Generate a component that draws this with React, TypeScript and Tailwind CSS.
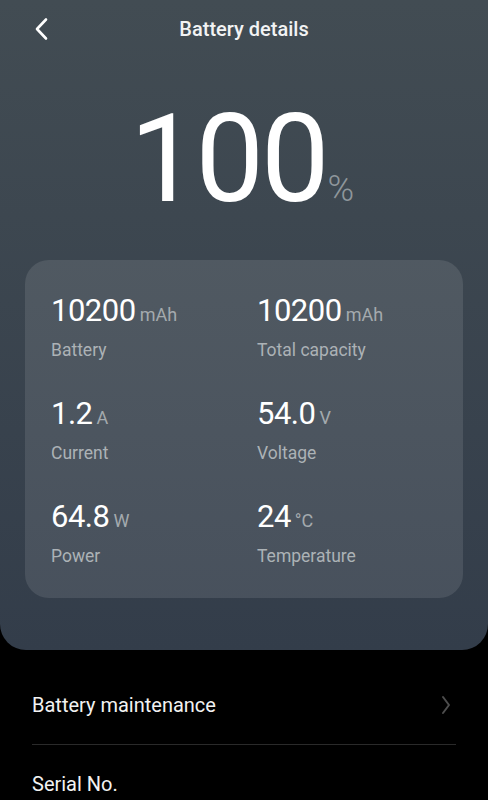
import React from "react";

const stats = [
  { value: "10200", unit: "mAh", label: "Battery" },
  { value: "10200", unit: "mAh", label: "Total capacity" },
  { value: "1.2", unit: "A", label: "Current" },
  { value: "54.0", unit: "V", label: "Voltage" },
  { value: "64.8", unit: "W", label: "Power" },
  { value: "24", unit: "°C", label: "Temperature" },
];

export default function App() {
  return (
    <div
      className="w-[488px] min-h-[800px] bg-black overflow-hidden"
      style={{ fontFamily: "Roboto, 'Noto Sans', sans-serif" }}
    >
      <div className="h-[650px] rounded-b-[26px] bg-gradient-to-b from-[#424c53] to-[#333d4a] flex flex-col">
        <div className="relative h-[58px] flex items-center justify-center">
          <svg
            className="absolute left-[33px] top-[17px]"
            width="18"
            height="24"
            viewBox="0 0 18 24"
            fill="none"
          >
            <path d="M13 2.5 L4 12 L13 21.5" stroke="#ffffff" strokeWidth="2.6" strokeLinecap="round" strokeLinejoin="round" />
          </svg>
          <span className="text-[20px] font-medium text-[#f2f3f4]">Battery details</span>
        </div>

        <div className="mt-[41px] flex items-baseline justify-center pr-[4px]">
          <span className="text-[122px] leading-none font-normal text-white tracking-[-3px]">100</span>
          <span className="ml-[1px] text-[36px] leading-none font-light text-[#8e969b]">%</span>
        </div>

        <div className="mt-[39px] mx-[25px] h-[338px] rounded-[24px] bg-white/10 pt-[33px] pl-[26px] grid grid-cols-[206px_1fr] gap-y-[34px] content-start">
          {stats.map((s, i) => (
            <div key={i} className="flex flex-col">
              <div className="flex items-baseline h-[36px]">
                <span className="text-[31px] leading-[36px] text-white tracking-[-0.5px]">{s.value}</span>
                <span className="ml-[4px] text-[18px] leading-[36px] text-[#a4aaae]">{s.unit}</span>
              </div>
              <span className="mt-[9px] text-[17.5px] leading-[24px] text-[#acb2b6]">{s.label}</span>
            </div>
          ))}
        </div>
      </div>

      <div className="px-[32px] pt-[16px]">
        <div className="flex items-center justify-between py-[27px] border-b border-[#2a2a2a]">
          <span className="text-[20px] leading-[24px] text-[#f2f2f2]">Battery maintenance</span>
          <svg width="16" height="24" viewBox="0 0 16 24" fill="none" className="mr-[2px]">
            <path d="M5 4 L11 12 L5 20" stroke="#4d4d4d" strokeWidth="2" strokeLinecap="round" strokeLinejoin="round" />
          </svg>
        </div>
        <div className="flex items-center py-[27px]">
          <span className="text-[20px] leading-[24px] text-[#f2f2f2]">Serial No.</span>
        </div>
      </div>
    </div>
  );
}
